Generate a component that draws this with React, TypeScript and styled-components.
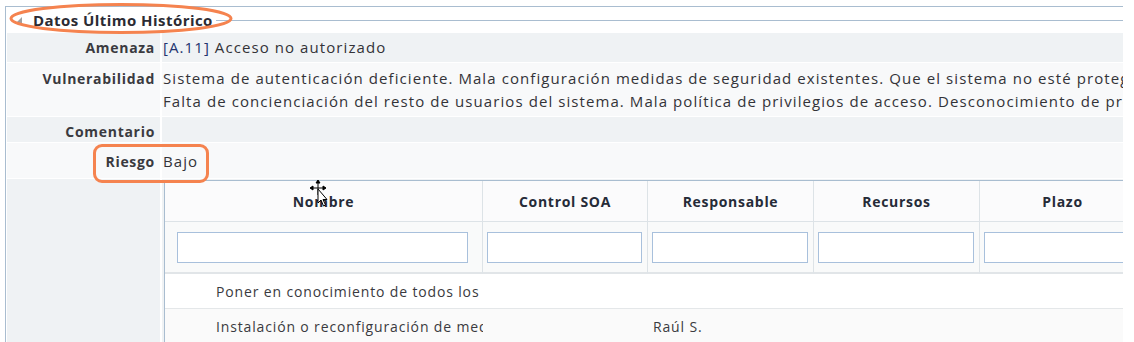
import React from "react";
import styled, { createGlobalStyle } from "styled-components";

const Global = createGlobalStyle`
  html, body { margin: 0; padding: 0; background: #ffffff; }
  body { font-family: "Open Sans", "Liberation Sans", sans-serif; color: #333; }
  * { box-sizing: border-box; }
`;

const Page = styled.div`
  position: relative;
  width: 1134px;
  height: 342px;
  overflow: hidden;
  padding: 6px 0 0 5px;
`;

const Frame = styled.div`
  width: 1118px;
  border-top: 1px solid #a9bdd0;
  border-left: 1px solid #a9bdd0;
  padding-left: 1px;
  overflow: hidden;
`;

const LegendRow = styled.div`
  display: flex;
  align-items: center;
  height: 26px;
  padding-left: 8px;
`;

const LegendText = styled.span`
  font-weight: 700;
  font-size: 15px;
  letter-spacing: 0.45px;
  color: #2b2b33;
  margin-left: 10px;
  margin-top: -1px;
  white-space: nowrap;
`;

const LegendLine = styled.div`
  flex: 1;
  height: 0;
  border-top: 1px solid #a9bdd0;
  margin-left: 3px;
  margin-top: 1px;
`;

const FormGrid = styled.div`
  display: grid;
  grid-template-columns: 153px 1fr;
  column-gap: 2px;
  row-gap: 1px;
`;

const Label = styled.div<{ $alt: boolean; $h: number; $pt: number }>`
  background: ${(p) => (p.$alt ? "#f8f9fa" : "#eff2f4")};
  height: ${(p) => p.$h}px;
  padding: ${(p) => p.$pt}px 5px 0 0;
  text-align: right;
  font-weight: 700;
  font-size: 14px;
  line-height: 23px;
  letter-spacing: 0.7px;
  color: #3a3a3f;
  white-space: nowrap;
`;

const Value = styled.div<{ $alt: boolean; $h: number; $pt: number }>`
  background: ${(p) => (p.$alt ? "#f8f9fa" : "#eff2f4")};
  height: ${(p) => p.$h}px;
  padding: ${(p) => p.$pt}px 0 0 1px;
  font-size: 15px;
  line-height: 23px;
  letter-spacing: 1.08px;
  color: #333338;
  white-space: nowrap;
  overflow: hidden;
`;

const Code = styled.span`
  color: #23346f;
`;

const TableCell = styled.div`
  background: #eff2f4;
  padding: 1px 0 0 2px;
  height: 170px;
  overflow: hidden;
`;

const Table = styled.div`
  display: grid;
  grid-template-columns: 318px 165px 166px 166px 166px;
  border-top: 1px solid #a9bdd0;
  border-left: 1px solid #a9bdd0;
  background: #ffffff;
  width: 1000px;
`;

const Th = styled.div`
  height: 41px;
  display: flex;
  align-items: center;
  justify-content: center;
  background: #fbfbfc;
  border-right: 1px solid #dde3e7;
  border-bottom: 1px solid #dde3e7;
  font-weight: 700;
  font-size: 14px;
  letter-spacing: 0.7px;
  color: #262b38;
`;

const FilterCell = styled.div<{ $first?: boolean }>`
  height: 52px;
  display: flex;
  align-items: center;
  padding: ${(p) => (p.$first ? "0 14px 0 12px" : "0 5px 0 4px")};
  background: #f9fafa;
  border-right: 1px solid #dde3e7;
  border-bottom: 2px solid #e1e5e8;
`;

const FilterInput = styled.input`
  width: 100%;
  height: 31px;
  border: 1px solid #a8c0dc;
  background: #ffffff;
  outline: none;
  padding: 0 4px;
`;

const Td = styled.div<{ $alt: boolean; $first?: boolean }>`
  height: 35px;
  display: flex;
  align-items: center;
  padding: ${(p) => (p.$first ? "0 5px 0 51px" : "0 5px")};
  background: ${(p) => (p.$alt ? "#fafafa" : "#ffffff")};
  border-bottom: 1px solid #e4e7e9;
  font-size: 14px;
  letter-spacing: 0.85px;
  color: #3a3a40;
  white-space: nowrap;
  overflow: hidden;
`;

const Ellipse = styled.svg`
  position: absolute;
  left: 0;
  top: 0;
  pointer-events: none;
`;

const HighlightBox = styled.div`
  position: absolute;
  left: 93px;
  top: 144px;
  width: 116px;
  height: 39px;
  border: 3px solid #f5834f;
  border-radius: 9px;
  pointer-events: none;
`;

const Cursor = styled.svg`
  position: absolute;
  left: 308px;
  top: 179px;
  pointer-events: none;
`;

const Triangle = () => (
  <svg width="8" height="8" viewBox="0 0 8 8">
    <path d="M7 1 L7 7 L1 7 Z" fill="#a0a0a0" />
  </svg>
);

type Row = { label: string; h: number; pt: number; content: React.ReactNode };

const rows: Row[] = [
  {
    label: "Amenaza",
    h: 29,
    pt: 3,
    content: (
      <>
        <Code>[A.11]</Code> Acceso no autorizado
      </>
    ),
  },
  {
    label: "Vulnerabilidad",
    h: 53,
    pt: 4,
    content: (
      <>
        Sistema de autenticación deficiente. Mala configuración medidas de seguridad existentes. Que el sistema no esté protegido
        <br />
        Falta de concienciación del resto de usuarios del sistema. Mala política de privilegios de acceso. Desconocimiento de procedimientos
      </>
    ),
  },
  { label: "Comentario", h: 25, pt: 3, content: null },
  { label: "Riesgo", h: 35, pt: 7, content: "Bajo" },
];

const headers = ["Nombre", "Control SOA", "Responsable", "Recursos", "Plazo"];
const data = [
  ["Poner en conocimiento de todos los usuarios las políticas", "", "", "", ""],
  ["Instalación o reconfiguración de medidas de seguridad", "", "Raúl S.", "", ""],
];

export default function App() {
  return (
    <>
      <Global />
      <Page>
        <Frame>
          <LegendRow>
            <Triangle />
            <LegendText>Datos Último Histórico</LegendText>
            <LegendLine />
          </LegendRow>
          <FormGrid>
            {rows.map((r, i) => (
              <React.Fragment key={r.label}>
                <Label $alt={i % 2 === 1} $h={r.h} $pt={r.pt}>
                  {r.label}
                </Label>
                <Value $alt={i % 2 === 1} $h={r.h} $pt={r.pt}>
                  {r.content}
                </Value>
              </React.Fragment>
            ))}
            <Label $alt={false} $h={170} $pt={0} />
            <TableCell>
              <Table>
                {headers.map((h) => (
                  <Th key={h}>{h}</Th>
                ))}
                {headers.map((h, i) => (
                  <FilterCell key={h} $first={i === 0}>
                    <FilterInput aria-label={h} />
                  </FilterCell>
                ))}
                {data.map((row, ri) =>
                  row.map((c, ci) => (
                    <Td key={`${ri}-${ci}`} $alt={ri % 2 === 1} $first={ci === 0}>
                      {c}
                    </Td>
                  ))
                )}
              </Table>
            </TableCell>
          </FormGrid>
        </Frame>
        <Ellipse width="240" height="40" viewBox="0 0 240 40">
          <ellipse cx="121" cy="18.5" rx="110" ry="14" fill="none" stroke="#f5834f" strokeWidth="3" />
        </Ellipse>
        <HighlightBox />
        <Cursor width="24" height="30" viewBox="0 0 24 30">
          <g stroke="#000" strokeWidth="1" fill="#000">
            <line x1="10" y1="2" x2="10" y2="16" />
            <line x1="3" y1="9" x2="17" y2="9" />
            <path d="M10 1 L8 4 L12 4 Z" />
            <path d="M2 9 L5 7 L5 11 Z" />
            <path d="M18 9 L15 7 L15 11 Z" />
          </g>
          <path d="M10 10 L10 24 L13 21 L15.5 27 L17.5 26 L15 20.5 L19 20.5 Z" fill="#fff" stroke="#000" strokeWidth="1" />
        </Cursor>
      </Page>
    </>
  );
}
